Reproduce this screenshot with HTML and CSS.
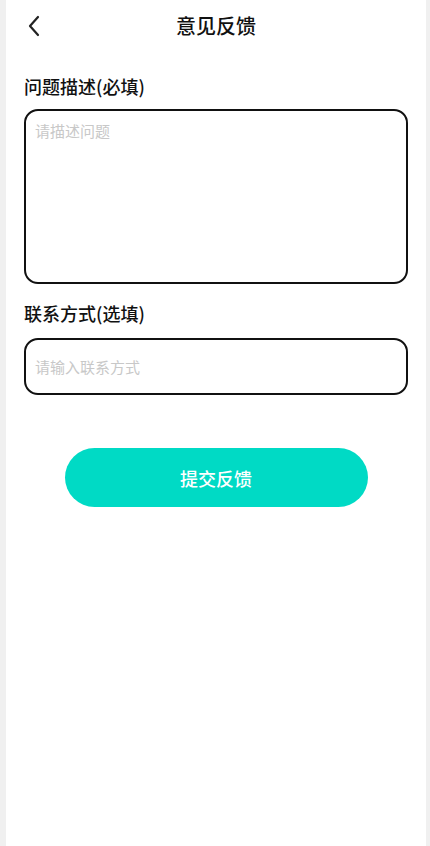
FILE: index.html
```html
<!DOCTYPE html>
<html lang="zh">
<head>
<meta charset="utf-8">
<title>意见反馈</title>
<link rel="stylesheet" href="styles.css">
</head>
<body>
<div class="page">
  <header class="header">
    <span class="back">
      <svg width="14" height="22" viewBox="0 0 14 22"><path d="M11 2 L3 11 L11 20" fill="none" stroke="#222" stroke-width="2.2" stroke-linecap="round" stroke-linejoin="round"/></svg>
    </span>
    <h1 class="title">意见反馈</h1>
  </header>
  <main class="form">
    <div class="label first">问题描述(必填)</div>
    <div class="box area"><span class="ph">请描述问题</span></div>
    <div class="label second">联系方式(选填)</div>
    <div class="box input"><span class="ph">请输入联系方式</span></div>
    <div class="btn-wrap"><div class="btn">提交反馈</div></div>
  </main>
</div>
</body>
</html>
```
FILE: styles.css
```css
html, body {
  margin: 0;
  padding: 0;
  background: #f0f0f0;
  font-family: "Noto Sans CJK SC", "Noto Sans", sans-serif;
}
.page {
  margin: 0 4px 0 6px;
  background: #fff;
  min-height: 846px;
}
.header {
  position: relative;
  height: 52px;
  display: flex;
  align-items: center;
  justify-content: center;
}
.back {
  position: absolute;
  left: 21px;
  top: 15px;
  display: flex;
}
.title {
  margin: 0;
  font-size: 20px;
  font-weight: 500;
  color: #111;
  line-height: 24px;
}
.form {
  padding: 0 18px;
  display: flex;
  flex-direction: column;
}
.label {
  font-size: 18px;
  font-weight: 500;
  color: #111;
  line-height: 24px;
}
.label.first { margin-top: 22px; }
.label.second { margin-top: 17px; }
.box {
  box-sizing: border-box;
  border: 2px solid #111;
  border-radius: 14px;
  padding: 0 9px;
}
.area {
  margin-top: 11px;
  height: 175px;
  padding-top: 7px;
}
.input {
  margin-top: 13px;
  height: 57px;
  display: flex;
  align-items: center;
}
.ph {
  font-size: 15px;
  color: #c8c8c8;
  line-height: 20px;
}
.btn-wrap {
  display: flex;
  justify-content: center;
  margin-top: 53px;
}
.btn {
  width: 303px;
  height: 59px;
  border-radius: 30px;
  background: #00dac5;
  color: #fff;
  font-size: 18px;
  font-weight: 500;
  display: flex;
  align-items: center;
  justify-content: center;
}
```
